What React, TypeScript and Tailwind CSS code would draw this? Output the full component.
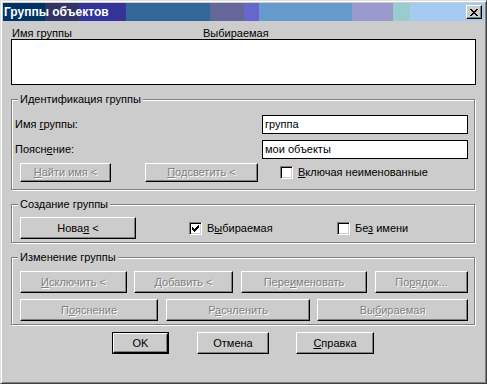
import type { ReactNode } from 'react';

// classic raised push button
function Btn({ className = '', disabled = false, children }: { className?: string; disabled?: boolean; children: ReactNode }) {
    return (
        <div
            className={`flex items-center justify-center border border-t-white border-l-white border-r-black border-b-black shadow-[inset_-1px_-1px_0_#808080] ${disabled ? 'text-[#808080] [text-shadow:1px_1px_0_#ffffff]' : 'text-black'} ${className}`}
        >
            <span>{children}</span>
        </div>
    );
}

function Check({ checked = false }: { checked?: boolean }) {
    return (
        <span className="flex h-[13px] w-[13px] shrink-0 items-center justify-center border border-t-[#808080] border-l-[#808080] border-r-white border-b-white bg-white shadow-[inset_1px_1px_0_#000000,inset_-1px_-1px_0_#cccccc]">
            {checked && (
                <svg width="7" height="7" viewBox="0 0 7 7" shapeRendering="crispEdges">
                    <path
                        fill="#000"
                        d="M6 0h1v1h-1zM5 1h2v1h-2zM0 2h1v1h-1zM4 2h3v1h-3zM0 3h2v1h-2zM3 3h3v1h-3zM0 4h5v1h-5zM1 5h3v1h-3zM2 6h1v1h-1z"
                    />
                </svg>
            )}
        </span>
    );
}

function Group({ title, className = '', children }: { title: string; className?: string; children: ReactNode }) {
    return (
        <div className={`w-[464px] border border-[#808080] shadow-[1px_1px_0_#ffffff,inset_1px_1px_0_#ffffff] ${className}`}>
            <div className="-mt-[7px] ml-[6px] h-[13px] w-fit bg-[#cccccc] px-[2px] leading-[13px]">{title}</div>
            {children}
        </div>
    );
}

function TextBox({ value }: { value: string }) {
    return (
        <div className="ml-auto mr-[6px] flex h-[19px] w-[206px] items-center border border-black bg-white pl-[2px]">
            {value}
        </div>
    );
}

export default function App() {
    return (
        <div className="h-[384px] w-[487px] border border-t-[#dfdfdf] border-l-[#dfdfdf] border-r-[#404040] border-b-[#404040] bg-[#cccccc] p-[2px] font-['Liberation_Sans',Arial,sans-serif] text-[11px] leading-[13px] text-black shadow-[inset_1px_1px_0_#ffffff,inset_-1px_-1px_0_#808080]">
            {/* title bar */}
            <div className="flex h-[18px] items-center justify-between bg-[linear-gradient(90deg,#003366_42px,#333366_42px,#333366_76px,#333399_76px,#333399_123px,#336699_123px,#336699_207px,#666699_207px,#666699_241px,#6666cc_241px,#6666cc_256px,#6699cc_256px,#6699cc_349px,#9999cc_349px,#9999cc_390px,#99cccc_390px,#99cccc_407px,#a6caf0_407px)] pl-[1px] pr-[2px]">
                <span className="text-[12px] font-bold text-white">Группы объектов</span>
                <div className="flex h-[14px] w-[16px] items-center justify-center border border-t-white border-l-white border-r-black border-b-black bg-[#cccccc] shadow-[inset_-1px_-1px_0_#808080]">
                    <svg width="8" height="7" viewBox="0 0 8 7" shapeRendering="crispEdges">
                        <path
                            fill="#000"
                            d="M0 0h2v1h-2zM6 0h2v1h-2zM1 1h2v1h-2zM5 1h2v1h-2zM2 2h4v1h-4zM3 3h2v1h-2zM2 4h4v1h-4zM1 5h2v1h-2zM5 5h2v1h-2zM0 6h2v1h-2zM6 6h2v1h-2z"
                        />
                    </svg>
                </div>
            </div>

            <div className="flex flex-col px-[8px]">
                {/* list header */}
                <div className="mt-[6px] flex h-[12px] leading-[12px]">
                    <span className="ml-[1px] w-[191px]">Имя группы</span>
                    <span>Выбираемая</span>
                </div>
                <div className="h-[46px] w-[465px] border border-black bg-white" />

                <Group title="Идентификация группы" className="mt-[14px] h-[91px]">
                    <div className="mt-[9px] flex h-[19px] items-center">
                        <span className="ml-[3px]">
                            Имя <u>г</u>руппы:
                        </span>
                        <TextBox value="группа" />
                    </div>
                    <div className="mt-[6px] flex h-[19px] items-center">
                        <span className="ml-[3px]">
                            Поясн<u>е</u>ние:
                        </span>
                        <TextBox value="мои объекты" />
                    </div>
                    <div className="mt-[4px] flex h-[19px] items-center">
                        <Btn disabled className="ml-[8px] h-[19px] w-[91px]">
                            <u>Н</u>айти имя &lt;
                        </Btn>
                        <Btn disabled className="ml-[34px] h-[19px] w-[113px]">
                            <u>П</u>одсветить &lt;
                        </Btn>
                        <div className="ml-[22px] flex items-center gap-[5px]">
                            <Check />
                            <span>
                                <u>В</u>ключая неименованные
                            </span>
                        </div>
                    </div>
                </Group>

                <Group title="Создание группы" className="mt-[14px] h-[39px]">
                    <div className="mt-[6px] flex h-[22px] items-center">
                        <Btn className="ml-[8px] h-[22px] w-[116px]">
                            Нова<u>я</u> &lt;
                        </Btn>
                        <div className="ml-[53px] flex w-[148px] items-center gap-[5px]">
                            <Check checked />
                            <span>
                                В<u>ы</u>бираемая
                            </span>
                        </div>
                        <div className="flex items-center gap-[5px]">
                            <Check />
                            <span>
                                Бе<u>з</u> имени
                            </span>
                        </div>
                    </div>
                </Group>

                <Group title="Изменение группы" className="mt-[14px] h-[68px]">
                    <div className="mt-[7px] flex h-[22px] items-center">
                        <Btn disabled className="ml-[8px] h-[22px] w-[107px]">
                            <u>И</u>сключить &lt;
                        </Btn>
                        <Btn disabled className="ml-[7px] h-[22px] w-[99px]">
                            <u>Д</u>обавить &lt;
                        </Btn>
                        <Btn disabled className="ml-[8px] h-[22px] w-[126px]">
                            Пере<u>и</u>меновать
                        </Btn>
                        <Btn disabled className="ml-[8px] h-[22px] w-[93px]">
                            По<u>р</u>ядок...
                        </Btn>
                    </div>
                    <div className="mt-[6px] flex h-[22px] items-center">
                        <Btn disabled className="ml-[8px] h-[22px] w-[138px]">
                            П<u>о</u>яснение
                        </Btn>
                        <Btn disabled className="ml-[8px] h-[22px] w-[144px]">
                            Р<u>а</u>счленить
                        </Btn>
                        <Btn disabled className="ml-[7px] h-[22px] w-[151px]">
                            Вы<u>б</u>ираемая
                        </Btn>
                    </div>
                </Group>

                {/* dialog buttons */}
                <div className="mt-[7px] flex h-[22px] items-center">
                    <div className="ml-[101px] h-[22px] w-[57px] border border-black">
                        <Btn className="h-full w-full">OK</Btn>
                    </div>
                    <Btn className="ml-[28px] h-[22px] w-[72px]">Отмена</Btn>
                    <Btn className="ml-[27px] h-[22px] w-[78px]">
                        <u>С</u>правка
                    </Btn>
                </div>
            </div>
        </div>
    );
}
